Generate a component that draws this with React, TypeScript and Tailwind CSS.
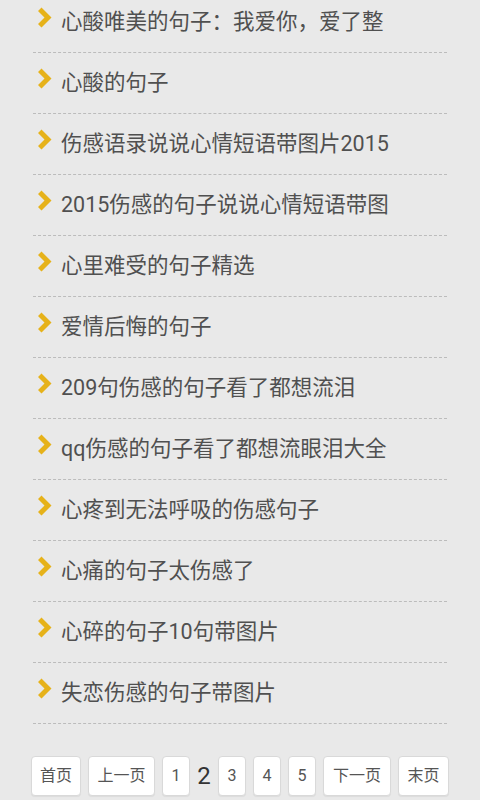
import React from 'react';

const titles = [
  '心酸唯美的句子：我爱你，爱了整',
  '心酸的句子',
  '伤感语录说说心情短语带图片2015',
  '2015伤感的句子说说心情短语带图',
  '心里难受的句子精选',
  '爱情后悔的句子',
  '209句伤感的句子看了都想流泪',
  'qq伤感的句子看了都想流眼泪大全',
  '心疼到无法呼吸的伤感句子',
  '心痛的句子太伤感了',
  '心碎的句子10句带图片',
  '失恋伤感的句子带图片',
];

// thick yellow chevron bullet
function Chevron() {
  return (
    <svg width="16" height="21" viewBox="0 0 16 21" className="shrink-0 -mt-[9px]">
      <polygon points="1,4 4.5,0.5 14.5,10.5 4.5,20.5 1,17 7.5,10.5" fill="#e6b21a" />
    </svg>
  );
}

const pageBtn =
  'h-10 flex items-center justify-center rounded-[4px] border border-[#d9d9d9] bg-white text-[16px] text-[#555] shadow-[0_1px_1px_rgba(0,0,0,0.06)]';

export default function App() {
  return (
    <div className="h-[800px] overflow-hidden bg-[#e9e9e9] font-['Roboto','Noto_Sans_CJK_SC',sans-serif]">
      {/* article list */}
      <ul className="mx-[33px] -mt-2">
        {titles.map((t) => (
          <li
            key={t}
            className="h-[61px] flex items-center gap-[8px] pl-[4px] border-b border-dashed border-[#bcbcbc]"
          >
            <Chevron />
            <span className="text-[21.5px] text-[#505050] whitespace-nowrap">{t}</span>
          </li>
        ))}
      </ul>

      {/* pager */}
      <div className="mt-8 flex items-center justify-center gap-[7px]">
        <span className={`${pageBtn} w-[50px]`}>首页</span>
        <span className={`${pageBtn} w-[67px]`}>上一页</span>
        <span className={`${pageBtn} w-[28px]`}>1</span>
        <span className="w-[14px] text-center text-[24px] leading-none text-[#333]">2</span>
        <span className={`${pageBtn} w-[28px]`}>3</span>
        <span className={`${pageBtn} w-[28px]`}>4</span>
        <span className={`${pageBtn} w-[28px]`}>5</span>
        <span className={`${pageBtn} w-[68px]`}>下一页</span>
        <span className={`${pageBtn} w-[51px]`}>末页</span>
      </div>
    </div>
  );
}
